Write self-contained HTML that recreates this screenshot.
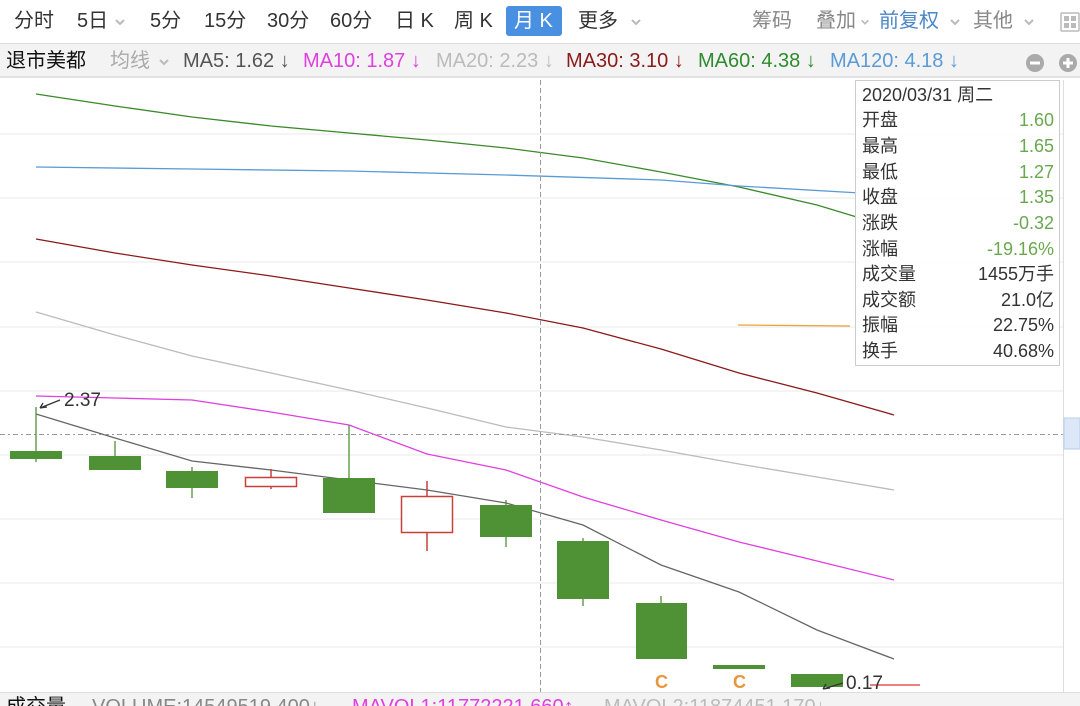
<!DOCTYPE html>
<html><head><meta charset="utf-8"><style>
*{margin:0;padding:0;box-sizing:border-box}
body{width:1080px;height:706px;overflow:hidden;background:#fff;font-family:"Liberation Sans","Noto Sans CJK SC",sans-serif;position:relative}
.t{position:absolute;white-space:nowrap;line-height:24px}
.bar1{position:absolute;left:0;top:0;width:1080px;height:44px;background:#fff;border-bottom:1px solid #ddd}
.bar2{position:absolute;left:0;top:44px;width:1080px;height:34px;background:#f3f3f3;border-bottom:2px solid #e2e2e2}
.tip{position:absolute;left:855px;top:80px;width:205px;height:286px;background:rgba(255,255,255,.95);border:1px solid #ccc;font-size:18px;color:#333}
.tip div{position:absolute;left:6px;right:5px;height:25px;line-height:25px;white-space:nowrap}
.tip span{position:absolute;right:0;top:0}
.g{color:#6aa84f}
.cv{display:inline-block;width:12px;height:8px;margin-left:6px;vertical-align:middle}
</style></head><body>
<div class="bar1"></div>
<svg width="0" height="0" style="position:absolute"><defs><symbol id="c" viewBox="0 0 12 8"><path d="M2,2 L6,6 L10,2" stroke="#bbb" stroke-width="2" fill="none"/></symbol></defs></svg>
<div class="t" style="left:14px;top:9px;font-size:20px;color:#333">分时</div>
<div class="t" style="left:77px;top:9px;font-size:20px;color:#333">5日<svg class="cv"><use href="#c"/></svg></div>
<div class="t" style="left:150px;top:9px;font-size:20px;color:#333">5分</div>
<div class="t" style="left:204px;top:9px;font-size:20px;color:#333">15分</div>
<div class="t" style="left:267px;top:9px;font-size:20px;color:#333">30分</div>
<div class="t" style="left:330px;top:9px;font-size:20px;color:#333">60分</div>
<div class="t" style="left:395px;top:9px;font-size:20px;color:#333">日 K</div>
<div class="t" style="left:454px;top:9px;font-size:20px;color:#333">周 K</div>
<div style="position:absolute;left:506px;top:6px;width:56px;height:30px;background:#4a90e2;border-radius:3px"></div>
<div class="t" style="left:514px;top:9px;font-size:20px;color:#fff">月 K</div>
<div class="t" style="left:578px;top:9px;font-size:20px;color:#333">更多<svg class="cv" style="margin-left:12px"><use href="#c"/></svg></div>
<div class="t" style="left:752px;top:9px;font-size:20px;color:#888">筹码</div>
<div class="t" style="left:816px;top:9px;font-size:20px;color:#888">叠加<svg class="cv" style="margin-left:4px;width:10px"><use href="#c"/></svg></div>
<div class="t" style="left:879px;top:9px;font-size:20px;color:#4a86c8">前复权<svg class="cv" style="margin-left:10px"><use href="#c"/></svg></div>
<div class="t" style="left:973px;top:9px;font-size:20px;color:#888">其他<svg class="cv" style="margin-left:10px"><use href="#c"/></svg></div>
<svg style="position:absolute;left:1060px;top:12px" width="20" height="20"><rect x="1" y="1" width="18" height="18" fill="none" stroke="#bbb" stroke-width="1.5" rx="1"/><rect x="4" y="4" width="5" height="5" fill="#bbb"/><rect x="11" y="4" width="5" height="5" fill="#bbb"/><rect x="4" y="11" width="5" height="5" fill="#bbb"/><rect x="11" y="11" width="5" height="5" fill="#bbb"/></svg>
<div class="bar2"></div>
<div class="t" style="left:6px;top:49px;font-size:20px;color:#111">退市美都</div>
<div class="t" style="left:110px;top:49px;font-size:20px;color:#aaa">均线<svg class="cv" style="margin-left:8px"><use href="#c"/></svg></div>
<div class="t" style="left:183px;top:49px;font-size:20px;color:#555">MA5: 1.62 ↓</div>
<div class="t" style="left:303px;top:49px;font-size:20px;color:#e040e0">MA10: 1.87 ↓</div>
<div class="t" style="left:436px;top:49px;font-size:20px;color:#bbb">MA20: 2.23 ↓</div>
<div class="t" style="left:566px;top:49px;font-size:20px;color:#8b1a1a">MA30: 3.10 ↓</div>
<div class="t" style="left:698px;top:49px;font-size:20px;color:#2e8b2e">MA60: 4.38 ↓</div>
<div class="t" style="left:830px;top:49px;font-size:20px;color:#5b9bd5">MA120: 4.18 ↓</div>
<svg style="position:absolute;left:1024px;top:52px" width="56" height="22"><circle cx="11" cy="11" r="9" fill="#aaa"/><rect x="6" y="9.5" width="10" height="3" fill="#fff"/><circle cx="44" cy="11" r="9" fill="#aaa"/><rect x="39" y="9.5" width="10" height="3" fill="#fff"/><rect x="42.5" y="6" width="3" height="10" fill="#fff"/></svg>
<svg style="position:absolute;left:0;top:80px" width="1080" height="612" viewBox="0 80 1080 612">
<g stroke="#e8e8e8" stroke-width="1">
<line x1="0" y1="134" x2="1063" y2="134"/><line x1="0" y1="198" x2="1063" y2="198"/><line x1="0" y1="262" x2="1063" y2="262"/><line x1="0" y1="327" x2="1063" y2="327"/><line x1="0" y1="391" x2="1063" y2="391"/><line x1="0" y1="455" x2="1063" y2="455"/><line x1="0" y1="519" x2="1063" y2="519"/><line x1="0" y1="583" x2="1063" y2="583"/><line x1="0" y1="647" x2="1063" y2="647"/>
</g>
<line x1="1063.5" y1="80" x2="1063.5" y2="692" stroke="#ddd"/>
<rect x="1064" y="418" width="16" height="31" fill="#dce8f8" stroke="#b8cce8"/>
<g fill="none" stroke-width="1.3">
<polyline stroke="#3a8a2a" points="36,94 115,106 192,117 271,126 349,133 427,140 506,148 583,158 661,172 739,187 817,205 860,218"/>
<polyline stroke="#5b9bd5" points="36,167 192,169 349,171 506,175 661,180 739,186 860,193"/>
<polyline stroke="#8b1a1a" points="36,239 115,253 192,265 271,276 349,288 427,300 506,313 583,328 661,349 739,373 817,393 894,415"/>
<polyline stroke="#bbb" points="36,312 115,335 192,356 271,373 349,390 427,408 506,427 583,437 661,450 739,464 817,477 894,490"/>
<polyline stroke="#e040e0" points="36,396 115,398 192,400 271,412 349,425 427,454 506,470 583,497 661,520 739,542 817,561 894,580"/>
<polyline stroke="#666" points="36,414 115,438 192,461 271,470 349,480 427,490 506,503 583,525 661,565 739,592 817,630 894,659"/>
<line x1="738" y1="325" x2="850" y2="326" stroke="#f0a030"/>
<line x1="870" y1="685" x2="920" y2="685" stroke="#e03030"/>
</g>
<line x1="540.5" y1="80" x2="540.5" y2="692" stroke="#999" stroke-dasharray="5,3"/>
<line x1="0" y1="434.5" x2="1063" y2="434.5" stroke="#999" stroke-dasharray="5,3,2,3"/>
<g stroke="#4f9135" stroke-width="1.3">
<line x1="36" y1="407" x2="36" y2="462"/><line x1="115" y1="441" x2="115" y2="470"/><line x1="192" y1="467" x2="192" y2="498"/><line x1="349" y1="425" x2="349" y2="513"/><line x1="506" y1="500" x2="506" y2="547"/><line x1="583" y1="538" x2="583" y2="606"/><line x1="661" y1="596" x2="661" y2="603"/>
</g>
<g fill="#4f9135">
<rect x="10" y="451" width="52" height="8"/><rect x="89" y="456" width="52" height="14"/><rect x="166" y="471" width="52" height="17"/><rect x="323" y="478" width="52" height="35"/><rect x="480" y="505" width="52" height="32"/><rect x="557" y="541" width="52" height="58"/><rect x="636" y="603" width="51" height="56"/><rect x="713" y="665" width="52" height="4"/><rect x="791" y="674" width="52" height="13"/>
</g>
<g stroke="#c8403a" stroke-width="1.5" fill="#fff">
<line x1="271" y1="469" x2="271" y2="489"/><rect x="245.5" y="477.5" width="51" height="9"/>
<line x1="427" y1="481" x2="427" y2="551"/><rect x="401.5" y="496.5" width="51" height="36"/>
</g>
<text x="655" y="688" font-family="Liberation Sans,sans-serif" font-weight="bold" font-size="18" fill="#e8963a" transform="scale(1,1)">C</text>
<text x="733" y="688" font-family="Liberation Sans,sans-serif" font-weight="bold" font-size="18" fill="#e8963a">C</text>
<path d="M60,400 L40,408 M40,408 l7,-1 M40,408 l3,-5" stroke="#333" stroke-width="1.3" fill="none"/>
<text x="64" y="406" font-family="Liberation Sans,sans-serif" font-size="19" fill="#333">2.37</text>
<path d="M843,683 L823,689 M823,689 l7,-1 M823,689 l3,-5" stroke="#333" stroke-width="1.3" fill="none"/>
<text x="846" y="689" font-family="Liberation Sans,sans-serif" font-size="19" fill="#333">0.17</text>
</svg>
<div style="position:absolute;left:0;top:692px;width:1080px;height:14px;background:#f3f3f3;border-top:1px solid #ddd;overflow:hidden">
<div class="t" style="left:6px;top:2px;font-size:20px;color:#111">成交量</div>
<div class="t" style="left:92px;top:2px;font-size:20px;color:#888">VOLUME:14549519.400↓</div>
<div class="t" style="left:352px;top:2px;font-size:20px;color:#e040e0">MAVOL1:11772221.660↑</div>
<div class="t" style="left:604px;top:2px;font-size:20px;color:#bbb">MAVOL2:11874451.170↓</div>
</div>
<div class="tip">
<div style="top:2px">2020/03/31 周二</div>
<div style="top:27px">开盘<span class="g">1.60</span></div>
<div style="top:53px">最高<span class="g">1.65</span></div>
<div style="top:79px">最低<span class="g">1.27</span></div>
<div style="top:104px">收盘<span class="g">1.35</span></div>
<div style="top:130px">涨跌<span class="g">-0.32</span></div>
<div style="top:156px">涨幅<span class="g">-19.16%</span></div>
<div style="top:181px">成交量<span>1455万手</span></div>
<div style="top:207px">成交额<span>21.0亿</span></div>
<div style="top:232px">振幅<span>22.75%</span></div>
<div style="top:258px">换手<span>40.68%</span></div>
</div>
</body></html>
